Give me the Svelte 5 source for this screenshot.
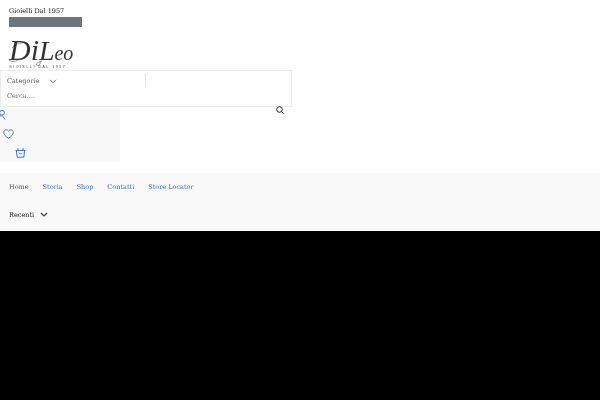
<script>
	const links = [
		{ label: 'Home', current: true },
		{ label: 'Storia' },
		{ label: 'Shop' },
		{ label: 'Contatti' },
		{ label: 'Store Locator' }
	];
</script>

<div class="page">
	<header class="top">
		<div class="tagline">Gioielli Dal 1957</div>
		<div class="grey-bar"></div>
		<div class="logo">
			<svg class="swash" width="68" height="28" viewBox="0 0 68 28" fill="none" stroke="#333" stroke-width="0.5">
				<path d="M0 20c3 2 6 2 9 0" />
				<path d="M3 8C6 4 10 3 14 3" />
				<path d="M31 21c1 3-1 5-3 4s1-3 5-4" />
			</svg>
			<div class="logo-name">Di<span class="l">L</span><span class="eo">eo</span></div>
			<div class="logo-sub">GIOIELLI DAL 1957</div>
		</div>
	</header>

	<div class="search">
		<div class="search-row">
			<div class="cat">
				<span>Categorie</span>
				<svg width="8" height="5" viewBox="0 0 8 5" fill="none" stroke="#666" stroke-width="0.9"><path d="M1 .8l3 3 3-3" /></svg>
			</div>
			<div class="divider"></div>
		</div>
		<div class="placeholder">Cerca....</div>
		<svg class="lens" width="8" height="8" viewBox="0 0 8 8" fill="none" stroke="#222" stroke-width="1">
			<circle cx="3.5" cy="3.5" r="2.800" />
			<path d="M5.500 5.500L7.600 7.600" />
		</svg>
	</div>

	<div class="panel">
		<svg class="ic user" width="8" height="10" viewBox="0 0 8 10" fill="none" stroke="#3a78c2" stroke-width="1">
			<circle cx="2" cy="2.800" r="2.400" />
			<path d="M-1 6.400c1.800-.9 3.400-.7 4.200.3l1.800 2.800" />
		</svg>
		<svg class="ic heart" width="11" height="10" viewBox="0 0 11 10" fill="none" stroke="#3a78c2" stroke-width="1">
			<path d="M5.500 9.200C3 7.600.8 6 .8 3.400.8 1.800 2 .8 3.200.8c1 0 1.800.5 2.300 1.200C6 1.300 6.800.8 7.800.8c1.200 0 2.400 1 2.400 2.600 0 2.600-2.200 4.200-4.700 5.800z" />
		</svg>
		<svg class="ic basket" width="11" height="11" viewBox="0 0 11 11" fill="none" stroke="#3a78c2" stroke-width="1">
			<path d="M.6 3.500h9.800M1.400 3.500l.8 6.700h6.600l.8-6.700" />
			<path d="M3 3.500V1M8 3.500V1" />
			<path d="M3.800 6c.8 1 2.600 1 3.400 0" />
		</svg>
	</div>

	<nav class="nav">
		<div class="links">
			{#each links as l}
				<a href="#top" class:current={l.current}>{l.label}</a>
			{/each}
		</div>
		<div class="recent">
			<span>Recenti</span>
			<svg width="8" height="6" viewBox="0 0 8 6" fill="none" stroke="#333" stroke-width="1.100"><path d="M1 1l3 3 3-3" /></svg>
		</div>
	</nav>

	<div class="black"></div>
</div>

<style>
:global(body) { margin:0; background:#fff; }
.page { width:600px; height:400px; overflow:hidden; display:flex; flex-direction:column; font-family:"DejaVu Serif", serif; font-size:6.5px; color:#222; will-change:transform; }
.top { height:70px; padding:6px 0 0 9px; box-sizing:border-box; flex:none; }
.tagline { line-height:10px; color:#111; }
.grey-bar { width:73px; height:10px; background:#6c757d; margin-top:1px; }
.logo { position:relative; margin-top:11px; width:68px; color:#333; }
.swash { position:absolute; left:0; top:2px; }
.logo-name { font-family:"Liberation Serif", serif; font-style:italic; font-size:30px; line-height:24px; height:27px; white-space:nowrap; }
.l { font-size:28px; }
.eo { font-size:20px; letter-spacing:-.3px; }
.logo-sub { font-family:"Liberation Sans", sans-serif; font-size:3.5px; line-height:4px; letter-spacing:1.55px; white-space:nowrap; color:#444; }
.search { position:relative; flex:none; width:292px; height:37px; box-sizing:border-box; border:1px solid #ececec; background:#fff; padding:0 0 0 6px; color:#555; }
.search-row { display:flex; align-items:center; height:20px; }
.cat { width:138px; display:flex; align-items:center; gap:10px; }
.divider { width:1px; height:14px; background:#e4e4e4; }
.placeholder { line-height:10px; color:#666; }
.lens { position:absolute; right:7px; top:35px; }
.panel { flex:none; width:120px; height:55px; background:#f8f8f8; position:relative; }
.ic { position:absolute; }
.user { left:0; top:3px; }
.heart { left:3px; top:22px; }
.basket { left:15px; top:40px; }
.nav { flex:none; height:58px; margin-top:11px; background:#f9f9f9; box-sizing:border-box; padding-left:9px; }
.links { display:flex; gap:14px; height:27px; align-items:center; }
.links a { color:#2f6fb8; text-decoration:none; }
.links a.current { color:#555; }
.recent { display:flex; align-items:center; gap:6px; height:29px; color:#111; }
.black { flex:1; background:#000; }
</style>
